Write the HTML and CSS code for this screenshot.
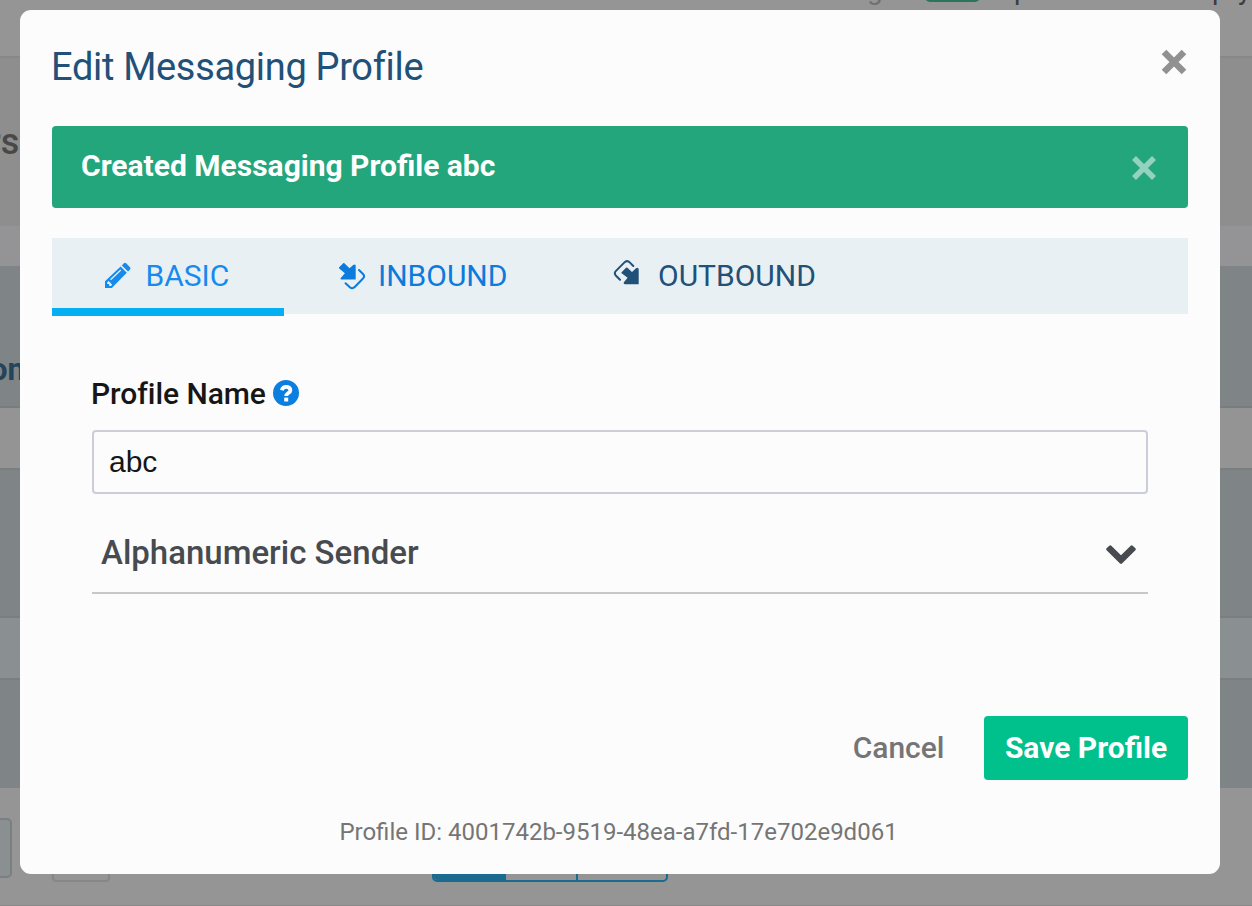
FILE: index.html
```html
<!DOCTYPE html>
<html lang="en">
<head>
<meta charset="utf-8">
<title>Edit Messaging Profile</title>
<link rel="stylesheet" href="styles.css">
</head>
<body>
<div class="page" aria-hidden="true">
  <div class="topbar"><span class="top-muted">g</span><span class="top-pill"></span><span class="top-p1">p</span><span class="top-p2">p</span><span class="top-y">y</span></div>
  <div class="heading-band"><span>rs</span></div>
  <div class="gap-band"></div>
  <div class="table-head"><span>on</span></div>
  <div class="row-plain"></div>
  <div class="row-dark"></div>
  <div class="row-light"></div>
  <div class="row-dark-last"></div>
  <div class="footer-band">
    <div class="foot-button"></div>
    <div class="foot-select"></div>
    <div class="pager"><i class="current"></i><i></i><i></i></div>
  </div>
</div>

<main class="modal">
  <header class="modal-header">
    <h1>Edit Messaging Profile</h1>
    <svg class="close" width="26" height="26" viewBox="0 0 26 26"><path d="M3 3L23 23M23 3L3 23"/></svg>
  </header>
  <div class="alert">
    <span>Created Messaging Profile abc</span>
    <svg class="close alert-close" width="26" height="26" viewBox="0 0 26 26"><path d="M3 3L23 23M23 3L3 23"/></svg>
  </div>
  <nav class="tabs">
    <a class="tab basic">
      <svg width="28" height="28" viewBox="0 0 28 28"><path fill="currentColor" fill-rule="evenodd" d="M1 26V19.2L16.6 4.600L22.800 10.800L7.800 26ZM3.200 20.200V22H5.200V24H7L8.200 22.800L4.600 18.900ZM6.100 17.300L7 18.200L17.200 8.500L16.400 7.600Z"/><path fill="currentColor" d="M17.800 3.400L19.900 1.300Q21 .3 22.200 1.300L26 5.200Q27 6.300 26 7.400L24 9.500Z"/></svg>
      <span>BASIC</span>
    </a>
    <a class="tab inbound">
      <svg width="28" height="28" viewBox="0 0 28 28"><path fill="currentColor" d="M1.200 5.200L5.200 1.200Q5.800 .6 6.400 1.200L11.500 6.300L15.200 3Q17.500 1.500 17.700 3.800V17.600H4Q1.500 17.300 3.200 15.400L6.900 11.200L1.200 6.500Q.6 5.800 1.200 5.200Z"/><path fill="none" stroke="currentColor" stroke-width="2" stroke-linecap="round" d="M21 8L25 12Q27.200 14.300 25 16.500L17 24.800Q14.300 27.500 11.600 25L7.500 21.300"/></svg>
      <span>INBOUND</span>
    </a>
    <a class="tab outbound">
      <svg width="28" height="28" viewBox="0 0 28 28"><path fill="currentColor" d="M8.400 13.400L13 8.800Q13.700 8.200 14.400 8.800L19 13L23 9.200Q25.500 8 25.700 10.500V25.200H12.300Q9.600 24.700 11.300 22.700L14.600 18.700L9 14.500Q7.900 13.900 8.400 13.400Z"/><path fill="none" stroke="currentColor" stroke-width="2" stroke-linecap="round" d="M7 20.800L3 16.800Q.6 14.300 3 11.900L11.200 3.600Q14 .8 16.700 3.400L20.300 7"/></svg>
      <span>OUTBOUND</span>
    </a>
  </nav>
  <section class="form">
    <label class="field-label" for="profile-name"><span>Profile Name</span>
      <svg width="26" height="26" viewBox="0 0 26 26"><circle cx="13" cy="13" r="13" fill="#0a7fe0"/><path d="M8.800 10.200C9.400 7.800 11 6.800 13.200 6.800C15.800 6.800 17.400 8.300 17.400 10.200C17.400 13 13.200 13 13.200 16" fill="none" stroke="#fff" stroke-width="3.800"/><path d="M11.200 17.600H15.200V21.500H11.200Z" fill="#fff"/></svg>
    </label>
    <input id="profile-name" class="input" type="text" value="abc">
    <div class="accordion">
      <h2>Alphanumeric Sender</h2>
      <svg width="30" height="20" viewBox="0 0 30 20"><path d="M.6 5.200Q-.3 4.200 .6 3.300L3.300 .7Q4.300-.2 5.300 .7L15 10.300L24.700 .7Q25.700-.2 26.700 .7L29.400 3.300Q30.300 4.200 29.400 5.200L16 18.600Q15 19.500 14 18.600Z" fill="#474b50"/></svg>
    </div>
  </section>
  <div class="actions">
    <button class="cancel">Cancel</button>
    <button class="save">Save Profile</button>
  </div>
  <footer class="profile-id">Profile ID: 4001742b-9519-48ea-a7fd-17e702e9d061</footer>
</main>
</body>
</html>
```

FILE: styles.css
```css
* { box-sizing: border-box; }
body { margin: 0; width: 1252px; height: 906px; overflow: hidden; font-family: Roboto, sans-serif; background: #959595; }
h1, h2 { margin: 0; }
svg { display: block; flex: none; }

.page { display: flex; flex-direction: column; height: 906px; }
.page > div { flex: none; overflow: hidden; }
.topbar { display: flex; height: 58px; border-bottom: 2px solid #888; font-size: 28px; line-height: 28px; color: #3c3c3c; }
.topbar span { flex: none; margin-top: -24px; }
.topbar .top-muted { margin-left: 867px; width: 58px; color: #707070; }
.topbar .top-pill { width: 55px; height: 26px; background: #2c7458; border-radius: 5px; }
.topbar .top-p1 { margin-left: 34px; width: 198px; }
.topbar .top-p2 { width: 26px; }
.heading-band { height: 168px; background: #8e8e8e; padding-top: 63px; font-size: 36px; line-height: 42px; font-weight: 500; color: #484848; }
.heading-band span { display: block; width: 32px; margin-left: -12px; }
.gap-band { height: 40px; background: #949496; }
.table-head { height: 142px; background: #7f8487; border-bottom: 2px solid #797d7f; padding-top: 86px; font-size: 31px; line-height: 36px; font-weight: 700; color: #23445b; }
.table-head span { display: block; margin-left: -10px; }
.row-plain { height: 60px; background: #949494; }
.row-dark { height: 150px; background: #7f8487; border: solid #7a7e81; border-width: 2px 0; }
.row-light { height: 60px; background: #8a8f92; }
.row-dark-last { height: 110px; background: #7f8487; border-top: 2px solid #7a7e81; }
.footer-band { display: flex; height: 118px; padding-top: 30px; border-bottom: 1px solid #888; }
.foot-button { width: 12px; height: 60px; background: #8a8f92; border: 2px solid #7b7f82; border-left: 0; border-radius: 0 5px 5px 0; }
.foot-select { width: 58px; height: 64px; margin-left: 40px; border: 2px solid #85888a; border-radius: 4px; }
.pager { display: flex; width: 236px; height: 64px; margin-left: 322px; border: 2px solid #1b6b91; border-radius: 5px; overflow: hidden; }
.pager i { width: 72px; border-right: 2px solid #1b6b91; }
.pager i:last-child { flex: 1; border: 0; }
.pager .current { background: #1b6b91; }

.modal { position: absolute; left: 20px; top: 10px; width: 1200px; height: 864px; padding: 0 32px; display: flex; flex-direction: column; background: #fcfcfc; border-radius: 11px; }
.modal-header { display: flex; justify-content: space-between; height: 116px; padding-top: 33px; }
.modal-header h1 { margin-left: -1px; font-size: 38px; line-height: 48px; font-weight: 400; letter-spacing: -.32px; color: #215078; }
.close { fill: none; stroke: #919191; stroke-width: 6.500px; }
.modal-header .close { margin: 6px 1px 0 0; }
.alert { display: flex; justify-content: space-between; height: 82px; padding: 20px 31px 0 29px; background: #24a67c; border-radius: 4px; color: #fff; font-size: 30px; line-height: 40px; font-weight: 700; }
.alert .alert-close { margin-top: 9px; stroke: #94d2bf; stroke-width: 5.500px; }
.tabs { display: flex; height: 76px; margin-top: 30px; background: #e8f0f4; font-size: 30px; line-height: 36px; }
.tab { display: flex; height: 78px; padding-top: 20px; }
.tab svg { margin-top: 4px; }
.basic { width: 232px; padding-left: 52px; gap: 13.5px; border-bottom: 8px solid #05aff2; color: #178bed; }
.inbound { width: 277px; padding-left: 54px; gap: 12px; color: #0b7bdc; }
.outbound { padding-left: 52px; gap: 17px; color: #215078; }
.outbound svg { margin-top: 1px; }
.form { padding: 60px 40px 0; }
.field-label { display: flex; align-items: center; gap: 7px; height: 40px; margin: -1px 0 0 -1px; font-size: 30px; font-weight: 500; letter-spacing: -.05px; color: #161616; }
.input { display: block; width: 100%; height: 64px; margin-top: 17px; padding: 0 15px; border: 2px solid #cbced8; border-radius: 4px; background: #fcfcfc; font: 400 30px/36px "Liberation Sans", Arial, sans-serif; color: #161616; outline: 0; }
.accordion { display: flex; justify-content: space-between; height: 100px; padding: 39px 12.5px 0 9px; border-bottom: 2px solid #c6c7c9; }
.accordion h2 { font-size: 33px; line-height: 40px; font-weight: 500; color: #474b50; }
.accordion svg { margin-top: 12px; }
.actions { display: flex; justify-content: flex-end; margin-top: 122px; height: 64px; }
.actions button { border: 0; padding: 0; font: 500 30px/64px Roboto, sans-serif; }
.actions .cancel { margin-right: 39.5px; background: none; color: #757575; }
.actions .save { width: 204px; background: #00c18c; border-radius: 4px; color: #fff; font-weight: 700; }
.profile-id { margin-top: 36px; padding-right: 3px; font-size: 24px; line-height: 32px; text-align: center; color: #757575; }
```
